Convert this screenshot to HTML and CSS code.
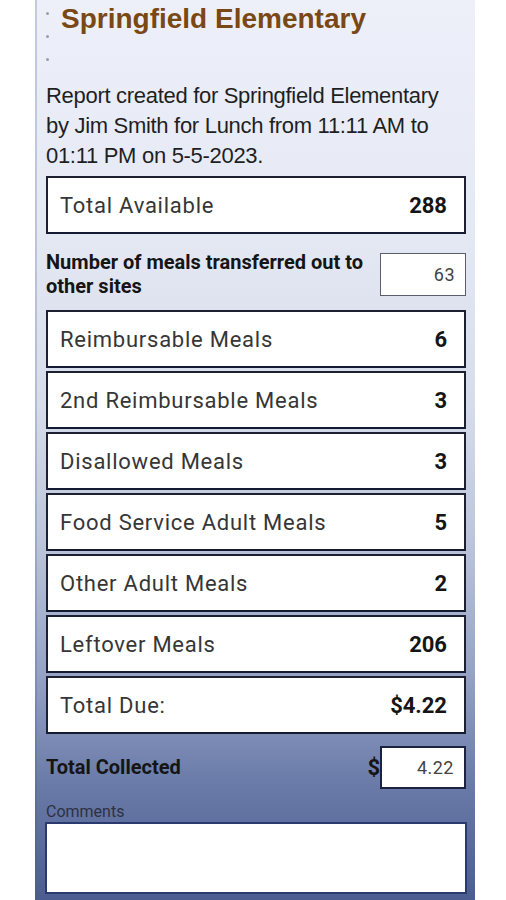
FILE: index.html
```html
<!DOCTYPE html>
<html>
<head>
<meta charset="utf-8">
<link rel="stylesheet" href="styles.css">
</head>
<body>
<div class="panel">
  <header class="head">
    <div class="dots"><span></span><span></span><span></span></div>
    <h1 class="title">Springfield Elementary</h1>
  </header>
  <p class="intro">Report created for Springfield Elementary by Jim Smith for Lunch from 11:11 AM to 01:11 PM on 5-5-2023.</p>

  <div class="box"><span class="label">Total Available</span><span class="value">288</span></div>

  <div class="field-row transfer">
    <span class="field-label">Number of meals transferred out to other sites</span>
    <div class="input">63</div>
  </div>

  <div class="box"><span class="label">Reimbursable Meals</span><span class="value">6</span></div>
  <div class="box"><span class="label">2nd Reimbursable Meals</span><span class="value">3</span></div>
  <div class="box"><span class="label">Disallowed Meals</span><span class="value">3</span></div>
  <div class="box"><span class="label">Food Service Adult Meals</span><span class="value">5</span></div>
  <div class="box"><span class="label">Other Adult Meals</span><span class="value">2</span></div>
  <div class="box"><span class="label">Leftover Meals</span><span class="value">206</span></div>
  <div class="box"><span class="label">Total Due:</span><span class="value">$4.22</span></div>

  <div class="field-row collected">
    <span class="field-label">Total Collected</span>
    <span class="dollar">$</span>
    <div class="input">4.22</div>
  </div>

  <div class="comments-label">Comments</div>
  <div class="comments"></div>
</div>
</body>
</html>
```

FILE: styles.css
```css
html, body {
  margin: 0;
  padding: 0;
  background: #ffffff;
}

body {
  font-family: Roboto, "Liberation Sans", Arial, sans-serif;
  color: #222;
}

.panel {
  margin-left: 35px;
  width: 440px;
  min-height: 900px;
  box-sizing: border-box;
  padding: 0 9px 0 9px;
  background: linear-gradient(to bottom,
    #edf0f9 0%,
    #e5e9f4 25%,
    #d6dcea 45%,
    #bcc5db 60%,
    #95a2c5 75%,
    #6a7ba9 87%,
    #4b5d90 100%);
  border-left: 2px solid rgba(70, 90, 140, 0.25);
  overflow: hidden;
}

.head {
  display: flex;
  height: 81px;
}

.dots {
  display: flex;
  flex-direction: column;
  gap: 20px;
  padding-top: 12px;
  width: 15px;
}

.dots span {
  display: block;
  width: 3px;
  height: 3px;
  border-radius: 50%;
  background: #9a9ea8;
}

.title {
  margin: 0;
  padding-top: 3px;
  font-family: "Liberation Sans", Arial, sans-serif;
  font-weight: bold;
  font-size: 28px;
  line-height: 32px;
  color: #7a4814;
}

.intro {
  margin: 0 0 5px 0;
  font-family: "Liberation Sans", Arial, sans-serif;
  font-size: 22px;
  line-height: 30px;
  color: #1f1f1f;
  letter-spacing: -0.3px;
}

.box {
  display: flex;
  justify-content: space-between;
  align-items: center;
  box-sizing: border-box;
  height: 58px;
  margin-bottom: 3px;
  padding: 0 17px 0 12px;
  background: #ffffff;
  border: 2px solid #1d2030;
  border-bottom-color: #151a33;
}

.label {
  font-size: 22px;
  color: #363636;
  letter-spacing: 0.75px;
}

.value {
  font-size: 22px;
  font-weight: bold;
  color: #151515;
}

.field-row {
  display: flex;
  align-items: center;
}

.transfer {
  margin: 16px 0 12px 0;
}

.collected {
  margin: 11px 0 0 0;
  height: 44px;
}

.field-label {
  flex: 1;
  font-size: 20px;
  line-height: 24px;
  font-weight: bold;
  color: #151515;
}

.transfer .field-label {
  padding-right: 8px;
}

.input {
  box-sizing: border-box;
  width: 86px;
  height: 43px;
  background: #ffffff;
  border: 1px solid #5b5f6b;
  font-size: 18px;
  line-height: 41px;
  text-align: right;
  padding-right: 10px;
  color: #444444;
  letter-spacing: 0.5px;
}

.collected .input {
  border: 2px solid #1d2240;
  line-height: 39px;
}

.dollar {
  font-size: 22px;
  font-weight: bold;
  color: #151515;
}

.comments-label {
  margin-top: 14px;
  font-size: 16px;
  line-height: 18px;
  color: #2e3140;
}

.comments {
  height: 72px;
  margin: 1px -1px 0 -1px;
  box-sizing: border-box;
  background: #ffffff;
  border: 2px solid #2a3a6e;
}
```
